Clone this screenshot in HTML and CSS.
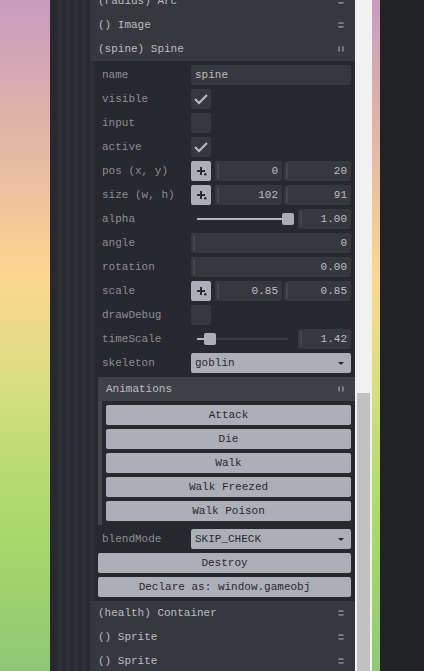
FILE: index.html
```html
<!DOCTYPE html>
<html>
<head>
<meta charset="utf-8">
<link rel="stylesheet" href="styles.css">
</head>
<body>
<div class="screen">
  <div class="canvas-gap"></div>
  <div class="panel">
    <div class="lvl0">
      <div class="lvl"><div class="lvl"><div class="lvl"><div class="lvl">
        <div class="list">
          <div class="fold-h first"><span>(radius) Arc</span><i class="mark closed"></i></div>
          <div class="fold-h"><span>() Image</span><i class="mark closed"></i></div>
          <div class="fold-h"><span>(spine) Spine</span><i class="mark"></i></div>
          <div class="fold-c">
            <div class="row"><div class="lbl">name</div><div class="val"><div class="txt">spine</div></div></div>
            <div class="row"><div class="lbl">visible</div><div class="val"><div class="ck"><svg viewBox="0 0 16 16" width="16" height="16"><path d="M2 8l4 4l8 -8"/></svg></div></div></div>
            <div class="row"><div class="lbl">input</div><div class="val"><div class="ck"></div></div></div>
            <div class="row"><div class="lbl">active</div><div class="val"><div class="ck"><svg viewBox="0 0 16 16" width="16" height="16"><path d="M2 8l4 4l8 -8"/></svg></div></div></div>
            <div class="row"><div class="lbl">pos (x, y)</div><div class="val">
              <div class="pbtn"><svg viewBox="0 0 16 16" width="16" height="16"><path d="M4 8h8M8 4v8"/><circle cx="12.3" cy="11.3" r="1.2"/></svg></div>
              <div class="pair"><div class="num">0</div><div class="num">20</div></div>
            </div></div>
            <div class="row"><div class="lbl">size (w, h)</div><div class="val">
              <div class="pbtn"><svg viewBox="0 0 16 16" width="16" height="16"><path d="M4 8h8M8 4v8"/><circle cx="12.3" cy="11.3" r="1.2"/></svg></div>
              <div class="pair"><div class="num">102</div><div class="num">91</div></div>
            </div></div>
            <div class="row"><div class="lbl">alpha</div><div class="val">
              <div class="slider"><div class="rail"><div class="fill" style="width:100%"></div><div class="knob" style="left:100%"></div></div></div>
              <div class="num short">1.00</div>
            </div></div>
            <div class="row"><div class="lbl">angle</div><div class="val"><div class="num">0</div></div></div>
            <div class="row"><div class="lbl">rotation</div><div class="val"><div class="num">0.00</div></div></div>
            <div class="row"><div class="lbl">scale</div><div class="val">
              <div class="pbtn"><svg viewBox="0 0 16 16" width="16" height="16"><path d="M4 8h8M8 4v8"/><circle cx="12.3" cy="11.3" r="1.2"/></svg></div>
              <div class="pair"><div class="num">0.85</div><div class="num">0.85</div></div>
            </div></div>
            <div class="row"><div class="lbl">drawDebug</div><div class="val"><div class="ck"></div></div></div>
            <div class="row"><div class="lbl">timeScale</div><div class="val">
              <div class="slider"><div class="rail"><div class="fill" style="width:14.2%"></div><div class="knob" style="left:14.2%"></div></div></div>
              <div class="num short">1.42</div>
            </div></div>
            <div class="row"><div class="lbl">skeleton</div><div class="val"><div class="sel"><span>goblin</span><svg viewBox="0 0 16 16" width="16" height="16"><path d="M5 7h6l-3 3z"/></svg></div></div></div>
            <div class="fold nested">
              <div class="fold-h sub"><span>Animations</span><i class="mark"></i></div>
              <div class="fold-c sub">
                <div class="btn">Attack</div>
                <div class="btn">Die</div>
                <div class="btn">Walk</div>
                <div class="btn">Walk Freezed</div>
                <div class="btn">Walk Poison</div>
              </div>
            </div>
            <div class="row"><div class="lbl">blendMode</div><div class="val"><div class="sel"><span>SKIP_CHECK</span><svg viewBox="0 0 16 16" width="16" height="16"><path d="M5 7h6l-3 3z"/></svg></div></div></div>
            <div class="btn">Destroy</div>
            <div class="btn">Declare as: window.gameobj</div>
          </div>
          <div class="fold-h"><span>(health) Container</span><i class="mark closed"></i></div>
          <div class="fold-h"><span>() Sprite</span><i class="mark closed"></i></div>
          <div class="fold-h"><span>() Sprite</span><i class="mark closed"></i></div>
        </div>
      </div></div></div></div>
    </div>
  </div>
  <div class="sbar"><div class="thumb"></div></div>
  <div class="canvas-strip"></div>
  <div class="dark"></div>
</div>
</body>
</html>
```

FILE: styles.css
```css
html, body {
  margin: 0;
  padding: 0;
}
body {
  width: 424px;
  height: 671px;
  overflow: hidden;
  font-family: "Liberation Mono", "Courier New", monospace;
  font-size: 11px;
}
.screen {
  display: flex;
  width: 424px;
  height: 671px;
  background: linear-gradient(to bottom,
    #c99bbf 0%, #d4a7b5 9%, #e0b3a8 18%, #e9bfa1 26%, #f5cd96 35%,
    #fcd78f 41%, #ecdb89 49%, #d6df80 58%, #c2dc75 66%, #addb6b 76%,
    #a0d46b 86%, #8fc877 100%);
}
.canvas-gap {
  width: 50px;
  flex-shrink: 0;
}
.panel {
  width: 305px;
  flex-shrink: 0;
  height: 671px;
  overflow: hidden;
  background: #28292e;
}
.lvl0 {
  padding-left: 8px;
  min-height: 100%;
  box-sizing: border-box;
  display: flex;
}
.lvl {
  flex: 1;
  display: flex;
  border-left: 4px solid #2f3035;
  padding-left: 4px;
}
.list {
  flex: 1;
  display: flex;
  flex-direction: column;
}
.fold-h {
  height: 24px;
  line-height: 24px;
  background: #37383d;
  color: #bbbcc4;
  padding-left: 8px;
  padding-right: 11px;
  display: flex;
  align-items: center;
  justify-content: space-between;
  white-space: nowrap;
}
.fold-h.first {
  margin-top: -11px;
}
.fold-h.sub {
  background: #404146;
}
.mark {
  display: block;
  width: 6px;
  height: 6px;
  border-radius: 2px;
  opacity: 0.5;
  background: linear-gradient(to left, #bbbcc4 2px, transparent 2px, transparent 4px, #bbbcc4 4px);
}
.mark.closed {
  transform: rotate(90deg);
}
.fold-c {
  border-left: 4px solid #2f3035;
  padding: 4px;
  display: flex;
  flex-direction: column;
  gap: 4px;
  background: #28292e;
}
.fold.nested {
  margin-right: -4px;
  display: flex;
  flex-direction: column;
}
.fold-c.sub {
  border-left-color: #45464b;
}
.row {
  display: flex;
  height: 20px;
  align-items: center;
}
.lbl {
  flex: 1;
  min-width: 0;
  padding-left: 4px;
  color: rgba(187, 188, 196, 0.7);
  white-space: nowrap;
  overflow: hidden;
}
.val {
  width: 160px;
  flex-shrink: 0;
  display: flex;
  gap: 4px;
  height: 20px;
}
.txt {
  flex: 1;
  background: #37383d;
  border-radius: 2px;
  color: #bbbcc4;
  line-height: 20px;
  padding: 0 4px;
}
.ck {
  width: 20px;
  height: 20px;
  background: #37383d;
  border-radius: 2px;
  display: flex;
  align-items: center;
  justify-content: center;
}
.ck svg path {
  fill: none;
  stroke: #bbbcc4;
  stroke-width: 2;
}
.pbtn {
  width: 20px;
  height: 20px;
  flex-shrink: 0;
  background: #adafb8;
  border-radius: 2px;
  display: flex;
  align-items: center;
  justify-content: center;
}
.pbtn svg path {
  fill: none;
  stroke: #28292e;
  stroke-width: 2;
}
.pbtn svg circle {
  fill: #28292e;
}
.pair {
  flex: 1;
  display: flex;
  gap: 2px;
}
.num {
  flex: 1;
  position: relative;
  background: #37383d;
  border-radius: 2px;
  color: #bbbcc4;
  line-height: 20px;
  text-align: right;
  padding: 0 4px;
}
.num::before {
  content: '';
  position: absolute;
  left: 2px;
  top: 2px;
  bottom: 2px;
  width: 2px;
  border-radius: 1px;
  background: #45464b;
}
.slider {
  flex: 2;
  padding: 0 6px;
  display: flex;
  align-items: center;
}
.num.short {
  flex: 1;
}
.rail {
  position: relative;
  flex: 1;
  height: 2px;
  background: #3a3b40;
}
.fill {
  height: 2px;
  background: #b4b5bc;
}
.knob {
  position: absolute;
  top: -5px;
  width: 12px;
  height: 12px;
  margin-left: -6px;
  border-radius: 2px;
  background: #adafb8;
}
.sel {
  flex: 1;
  background: #adafb8;
  border-radius: 2px;
  color: #28292e;
  line-height: 20px;
  padding-left: 4px;
  padding-right: 2px;
  display: flex;
  align-items: center;
  justify-content: space-between;
}
.sel svg path {
  fill: #28292e;
}
.btn {
  height: 20px;
  line-height: 20px;
  background: #adafb8;
  color: #28292e;
  border-radius: 2px;
  text-align: center;
  white-space: nowrap;
}
.sbar {
  width: 17px;
  flex-shrink: 0;
  background: #f1f1f1;
  display: flex;
  flex-direction: column;
}
.thumb {
  margin: 393px 2px 0 2px;
  flex: 1;
  background: #c1c1c1;
}
.canvas-strip {
  width: 8px;
  flex-shrink: 0;
}
.dark {
  flex: 1;
  background: #212226;
}
```
